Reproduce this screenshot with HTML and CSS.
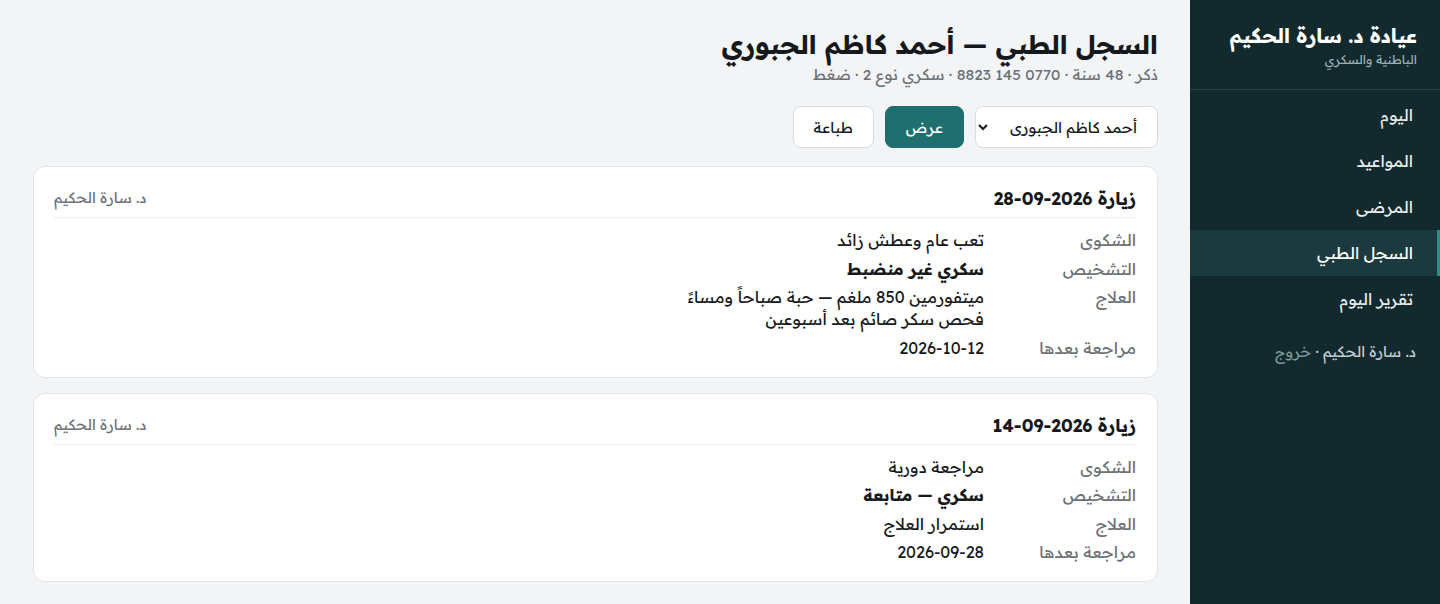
FILE: index.html
```html
<!DOCTYPE html>
<html lang="ar" dir="rtl">
<head>
<meta charset="utf-8">
<title>السجل الطبي</title>
<link rel="stylesheet" href="styles.css">
</head>
<body>
<div class="app">
  <aside class="sidebar">
    <div class="brand">
      <div class="brand-title">عيادة د. سارة الحكيم</div>
      <div class="brand-sub">الباطنية والسكري</div>
    </div>
    <nav class="nav">
      <a class="nav-item" href="#">اليوم</a>
      <a class="nav-item" href="#">المواعيد</a>
      <a class="nav-item" href="#">المرضى</a>
      <a class="nav-item active" href="#">السجل الطبي</a>
      <a class="nav-item" href="#">تقرير اليوم</a>
    </nav>
    <div class="user">د. سارة الحكيم · <span class="logout">خروج</span></div>
  </aside>
  <main class="main">
    <h1 class="page-title">السجل الطبي — أحمد كاظم الجبوري</h1>
    <div class="page-sub">ذكر · 48 سنة · 0770 145 8823 · سكري نوع 2 · ضغط</div>
    <div class="controls">
      <select class="select">
        <option>أحمد كاظم الجبورى</option>
      </select>
      <button class="btn btn-primary">عرض</button>
      <button class="btn">طباعة</button>
    </div>
    <section class="card">
      <div class="card-head">
        <div class="visit">زيارة 2026-09-28</div>
        <div class="doctor">د. سارة الحكيم</div>
      </div>
      <div class="rows">
        <div class="label">الشكوى</div>
        <div class="value">تعب عام وعطش زائد</div>
        <div class="label">التشخيص</div>
        <div class="value strong">سكري غير منضبط</div>
        <div class="label">العلاج</div>
        <div class="value">ميتفورمين 850 ملغم — حبة صباحاً ومساءً<br>فحص سكر صائم بعد أسبوعين</div>
        <div class="label">مراجعة بعدها</div>
        <div class="value">2026-10-12</div>
      </div>
    </section>
    <section class="card">
      <div class="card-head">
        <div class="visit">زيارة 2026-09-14</div>
        <div class="doctor">د. سارة الحكيم</div>
      </div>
      <div class="rows">
        <div class="label">الشكوى</div>
        <div class="value">مراجعة دورية</div>
        <div class="label">التشخيص</div>
        <div class="value strong">سكري — متابعة</div>
        <div class="label">العلاج</div>
        <div class="value">استمرار العلاج</div>
        <div class="label">مراجعة بعدها</div>
        <div class="value">2026-09-28</div>
      </div>
    </section>
  </main>
</div>
</body>
</html>
```

FILE: styles.css
```css
* { box-sizing: border-box; }
html, body { margin: 0; padding: 0; }
body {
  font-family: "Readex Pro", "Noto Sans Arabic", sans-serif;
  background: #f3f4f5;
  color: #16191c;
}
.app {
  display: flex;
  min-height: 604px;
}
.sidebar {
  width: 250px;
  flex: 0 0 250px;
  background: #12292e;
  color: #eef3f3;
  display: flex;
  flex-direction: column;
}
.brand {
  padding: 22px 23px 19px;
  border-bottom: 1px solid #28414a;
}
.brand-title {
  font-size: 20px;
  font-weight: 700;
  line-height: 28px;
  color: #ffffff;
}
.brand-sub {
  font-size: 12.2px;
  line-height: 20px;
  color: #9fb0b3;
}
.nav {
  display: flex;
  flex-direction: column;
  padding-top: 2px;
}
.nav-item {
  display: block;
  height: 46px;
  line-height: 46px;
  padding: 0 24px;
  font-size: 16.2px;
  color: #e8eeee;
  text-decoration: none;
  border-right: 3px solid transparent;
}
.nav-item.active {
  background: #1b3a3f;
  border-right-color: #2c8e88;
  color: #ffffff;
}
.user {
  padding: 20px 24px 0;
  font-size: 14.7px;
  line-height: 20px;
  color: #c4cfd1;
}
.logout {
  color: #7d9a9a;
}
.main {
  flex: 1;
  padding: 28px 32px 20px 33px;
  display: flex;
  flex-direction: column;
}
.page-title {
  margin: 0;
  font-size: 26.3px;
  line-height: 34px;
  font-weight: 700;
  color: #16191c;
}
.page-sub {
  font-size: 15.3px;
  line-height: 26px;
  color: #6b7075;
}
.controls {
  display: flex;
  gap: 11px;
  margin-top: 18px;
  margin-bottom: 18px;
}
.select {
  width: 183px;
  height: 42px;
  padding: 0 16px 0 10px;
  border: 1px solid #d9dde0;
  border-radius: 8px;
  background: #ffffff;
  font-family: inherit;
  font-size: 15px;
  color: #16191c;
}
.btn {
  height: 42px;
  padding: 0 20px;
  border: 1px solid #d9dde0;
  border-radius: 8px;
  background: #ffffff;
  font-family: inherit;
  font-size: 15px;
  color: #16191c;
}
.btn-primary {
  background: #1f6f6f;
  border-color: #1f6f6f;
  color: #ffffff;
}
.card {
  background: #ffffff;
  border: 1px solid #e3e6e8;
  border-radius: 12px;
  padding: 20px 21px 18px 20px;
  margin-bottom: 15px;
}
.card-head {
  display: flex;
  justify-content: space-between;
  align-items: center;
  padding-bottom: 8px;
  border-bottom: 1px solid #eceef0;
}
.visit {
  font-size: 17.5px;
  line-height: 22px;
  font-weight: 700;
}
.doctor {
  font-size: 14.6px;
  line-height: 22px;
  color: #6b7075;
}
.rows {
  display: grid;
  grid-template-columns: 152px 1fr;
  row-gap: 6.5px;
  margin-top: 11px;
  font-size: 16.3px;
  line-height: 22px;
}
.label {
  color: #6b7075;
}
.value {
  color: #16191c;
}
.value.strong {
  font-weight: 700;
}
```
